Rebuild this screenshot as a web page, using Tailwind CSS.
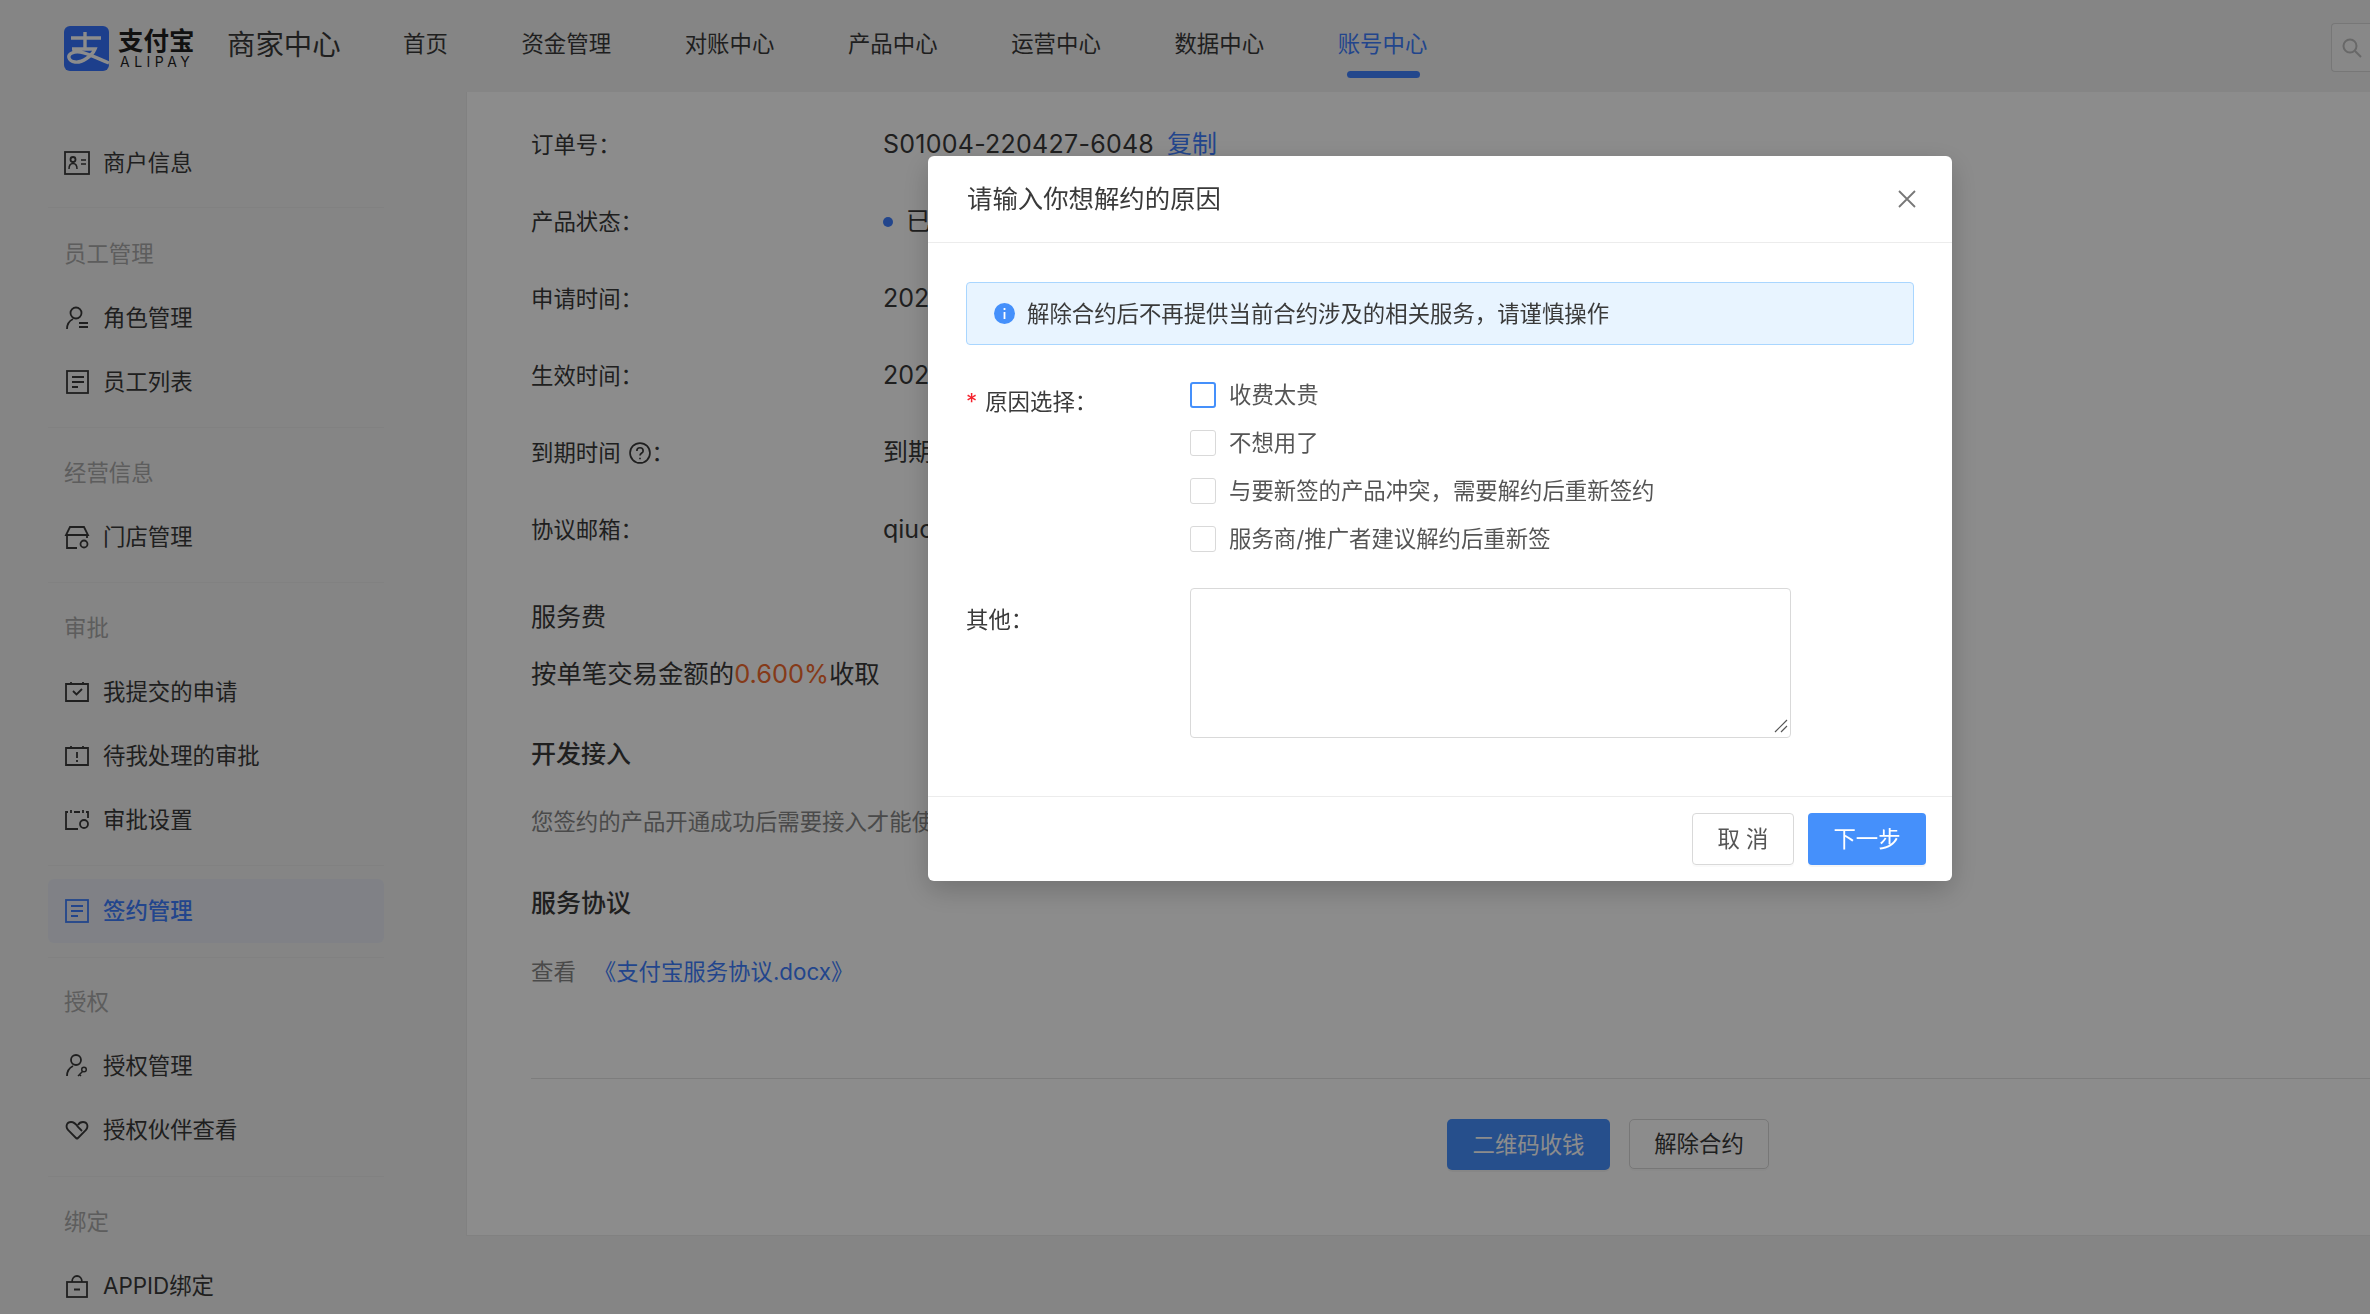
<!DOCTYPE html>
<html lang="zh-CN">
<head>
    <meta charset="UTF-8">
    <title>商家中心</title>
    <script src="https://cdn.jsdelivr.net/npm/@tailwindcss/browser@4"></script>
</head>
<body class="h-[1314px] overflow-hidden bg-[#f2f2f2] text-[22.4px] text-[#3a3a3a] font-['Inter','Noto_Sans_CJK_SC',sans-serif]">

    <!-- Header -->
    <header class="h-[92px] flex items-start bg-[#f2f2f2]">
        <div class="flex items-center ml-[64px] mt-[24px] w-[339px]">
            <svg class="w-[45px] h-[45px]" viewBox="0 0 45 45">
                <rect width="45" height="45" rx="6" fill="#3573ff"/>
                <path d="M7 12H37M21 6V23M8 23H31C28 30 18 37 11 36 4 35 3 29 8 27 16 23 28 30 45 37" fill="none" stroke="#fff" stroke-width="3.400"/>
            </svg>
            <div class="ml-[9px] w-[76px] text-[#1f1f1f]">
                <div class="text-[25.500px] leading-[26px] font-bold whitespace-nowrap">支付宝</div>
                <div class="text-[14px] leading-[15px] tracking-[4.500px] pl-[2px]">ALIPAY</div>
            </div>
            <div class="ml-[33px] mb-[7px] text-[28.400px] whitespace-nowrap">商家中心</div>
        </div>
        <nav class="flex gap-[73.700px] h-[92px] whitespace-nowrap">
            <a class="h-[88px] flex items-center">首页</a>
            <a class="h-[88px] flex items-center">资金管理</a>
            <a class="h-[88px] flex items-center">对账中心</a>
            <a class="h-[88px] flex items-center">产品中心</a>
            <a class="h-[88px] flex items-center">运营中心</a>
            <a class="h-[88px] flex items-center">数据中心</a>
            <a class="relative h-[88px] flex items-center text-[#3f7fff]">账号中心
                <span class="absolute left-[9px] right-[7px] top-[71px] h-[7px] rounded-full bg-[#4182ff]"></span>
            </a>
        </nav>
        <div class="ml-auto mt-[23px] w-[39px] h-[49px] pl-[10px] flex items-center border border-r-0 border-[#d9d9d9] rounded-l-[4px] bg-[#f7f7f7]">
            <svg class="w-[20px] h-[20px]" viewBox="0 0 20 20" fill="none" stroke="#bdbdbd" stroke-width="2"><circle cx="8" cy="8" r="6.500"/><path d="M13 13l6 6"/></svg>
        </div>
    </header>

    <div class="flex">
        <!-- Sidebar -->
        <aside class="w-[466px] shrink-0 pl-[48px] pr-[82px] pt-[39px]">
            <a class="h-[64px] flex items-center gap-[13px] pl-[16px]">
                <svg class="w-[26px] h-[24px]" viewBox="0 0 26 24" fill="none" stroke="#3a3a3a" stroke-width="1.800"><rect x="1" y="1" width="24" height="22"/><circle cx="9" cy="8.500" r="2.500"/><path d="M5 18c0-3 1.500-5.500 4-5.500s4 2.500 4 5.500M17 9h5M17 13h5" stroke-width="1.500"/></svg>
                商户信息
            </a>
            <div class="mt-[12px] h-px bg-[#ebebeb]"></div>

            <div class="mt-[14px] h-[64px] flex items-center pl-[16px] text-[#aaa]">员工管理</div>
            <a class="h-[64px] flex items-center gap-[13px] pl-[16px]">
                <svg class="w-[26px] h-[26px]" viewBox="0 0 26 26" fill="none" stroke="#3a3a3a" stroke-width="1.800"><circle cx="12" cy="8" r="5.500"/><path d="M3 24c0-5 2-8 6-10M15 18h9M15 22h9"/></svg>
                角色管理
            </a>
            <a class="h-[64px] flex items-center gap-[13px] pl-[16px]">
                <svg class="w-[26px] h-[26px]" viewBox="0 0 26 26" fill="none" stroke="#3a3a3a" stroke-width="1.800"><rect x="3" y="2" width="21" height="22"/><path d="M8 8h12M8 13h12M8 18h6"/></svg>
                员工列表
            </a>
            <div class="mt-[13px] h-px bg-[#ebebeb]"></div>

            <div class="mt-[13px] h-[64px] flex items-center pl-[16px] text-[#aaa]">经营信息</div>
            <a class="h-[64px] flex items-center gap-[13px] pl-[16px]">
                <svg class="w-[26px] h-[26px]" viewBox="0 0 26 26" fill="none" stroke="#3a3a3a" stroke-width="1.800"><path d="M6 3h14l4 8H2zM3 11v13h10M23 11v3"/><circle cx="20" cy="20" r="3.500"/></svg>
                门店管理
            </a>
            <div class="mt-[13px] h-px bg-[#ebebeb]"></div>

            <div class="mt-[13px] h-[64px] flex items-center pl-[16px] text-[#aaa]">审批</div>
            <a class="h-[64px] flex items-center gap-[13px] pl-[16px]">
                <svg class="w-[26px] h-[26px]" viewBox="0 0 26 26" fill="none" stroke="#3a3a3a" stroke-width="1.800"><path d="M7 3v3M19 3v3M2 5h22v17H2z"/><path d="M9 12l3.500 3.500L18 10"/></svg>
                我提交的申请
            </a>
            <a class="h-[64px] flex items-center gap-[13px] pl-[16px]">
                <svg class="w-[26px] h-[26px]" viewBox="0 0 26 26" fill="none" stroke="#3a3a3a" stroke-width="1.800"><path d="M7 3v3M19 3v3M2 5h22v17H2z"/><path d="M13 9v6M13 17v2"/></svg>
                待我处理的审批
            </a>
            <a class="h-[64px] flex items-center gap-[13px] pl-[16px]">
                <svg class="w-[26px] h-[26px]" viewBox="0 0 26 26" fill="none" stroke="#3a3a3a" stroke-width="1.800"><path d="M7 3v3M19 3v3M10 5h6M22 5h2v6M14 22H2V5h2"/><circle cx="20" cy="17" r="4"/></svg>
                审批设置
            </a>
            <div class="mt-[13px] h-px bg-[#ebebeb]"></div>

            <a class="mt-[13px] h-[64px] flex items-center gap-[13px] pl-[16px] rounded-[6px] bg-[#e9ecf5] text-[#3f7fff] font-medium">
                <svg class="w-[26px] h-[26px]" viewBox="0 0 26 26" fill="none" stroke="#3f7fff" stroke-width="1.800"><rect x="2" y="2" width="22" height="22"/><path d="M7 8h12M7 13h12M7 18h7"/></svg>
                签约管理
            </a>
            <div class="mt-[14px] h-px bg-[#ebebeb]"></div>

            <div class="mt-[12px] h-[64px] flex items-center pl-[16px] text-[#aaa]">授权</div>
            <a class="h-[64px] flex items-center gap-[13px] pl-[16px]">
                <svg class="w-[26px] h-[26px]" viewBox="0 0 26 26" fill="none" stroke="#3a3a3a" stroke-width="1.800"><circle cx="12" cy="7" r="5"/><path d="M3 23c0-5 2-8 6-10"/><circle cx="20" cy="16.500" r="2.300" stroke-width="1.500"/><path d="M18.500 18.500 14 23M15 21l2 2" stroke-width="1.500"/></svg>
                授权管理
            </a>
            <a class="h-[64px] flex items-center gap-[13px] pl-[16px]">
                <svg class="w-[26px] h-[26px]" viewBox="0 0 26 26" fill="none" stroke="#3a3a3a" stroke-width="1.800"><path d="M13 22 4 13C1 9 3 5 7 5c3 0 5 2 7 5l4 4M13 22l9-9c3-4 1-8-3-8-2 0-4 1-5 3"/></svg>
                授权伙伴查看
            </a>
            <div class="mt-[14px] h-px bg-[#ebebeb]"></div>

            <div class="mt-[13px] h-[64px] flex items-center pl-[16px] text-[#aaa]">绑定</div>
            <a class="h-[64px] flex items-center gap-[13px] pl-[16px]">
                <svg class="w-[26px] h-[26px]" viewBox="0 0 26 26" fill="none" stroke="#3a3a3a" stroke-width="1.800"><rect x="3" y="9" width="20" height="15"/><path d="M8 9c0-8 10-8 10 0M10 16.500h6"/></svg>
                APPID绑定
            </a>
        </aside>

        <!-- Detail panel -->
        <main class="flex-1 h-[1144px] bg-white border-l border-b border-[#ebebeb] pl-[64px] pt-[22px]">
            <div class="h-[62px] flex items-center"><span class="w-[352px]">订单号：</span><span class="text-[25px] tracking-[0.250px]">S01004-220427-6048</span><a class="ml-[13px] text-[25px] text-[#3f7fff]">复制</a></div>
            <div class="mt-[15px] h-[62px] flex items-center"><span class="w-[352px]">产品状态：</span><span class="w-[10px] h-[10px] rounded-full bg-[#3f7fff] mr-[13px]"></span><span class="text-[25px]">已生效</span></div>
            <div class="mt-[15px] h-[62px] flex items-center"><span class="w-[352px]">申请时间：</span><span class="text-[25px]">2022-04-27 10:12:36</span></div>
            <div class="mt-[15px] h-[62px] flex items-center"><span class="w-[352px]">生效时间：</span><span class="text-[25px]">2022-04-27 10:15:02</span></div>
            <div class="mt-[15px] h-[62px] flex items-center">
                <span class="w-[352px] flex items-center">到期时间
                    <svg class="w-[22px] h-[22px] ml-[8px] mr-[1px]" viewBox="0 0 21 21" fill="none" stroke="#3a3a3a" stroke-width="1.600"><circle cx="10.500" cy="10.500" r="9.500"/><path d="M7.500 8.500c0-4 6-4 6 0 0 2-3 2-3 4.500M10.500 15v1.500"/></svg>：</span>
                <span class="text-[25px]">到期后自动续约</span>
            </div>
            <div class="mt-[15px] h-[62px] flex items-center"><span class="w-[352px]">协议邮箱：</span><span class="text-[25px]">qiuchen@alipay.com</span></div>

            <h3 class="mt-[36px] text-[25px] leading-[40px]">服务费</h3>
            <p class="mt-[17px] text-[25.400px] leading-[40px]">按单笔交易金额的<span class="text-[#f26a2e]">0.600%</span>收取</p>
            <h3 class="mt-[40px] text-[25px] leading-[40px] font-medium">开发接入</h3>
            <p class="mt-[28px] leading-[40px] text-[#888] whitespace-nowrap">您签约的产品开通成功后需要接入才能使用</p>
            <h3 class="mt-[41px] text-[25px] leading-[40px] font-medium">服务协议</h3>
            <p class="mt-[29px] leading-[40px] text-[#888]">查看<a class="ml-[18px] text-[#3f7fff]">《支付宝服务协议.docx》</a></p>

            <div class="mt-[86px] h-px bg-[#e3e3e3]"></div>
            <div class="mt-[40px] ml-[916px] flex gap-[19px]">
                <button class="w-[163px] h-[51px] rounded-[5px] bg-[#4590ff] text-white shadow-[0_2px_0_rgba(0,0,0,0.04)]">二维码收钱</button>
                <button class="w-[140px] h-[50px] rounded-[5px] border border-[#d9d9d9] bg-white shadow-[0_2px_0_rgba(0,0,0,0.02)]">解除合约</button>
            </div>
        </main>
    </div>

    <!-- Mask + modal -->
    <div class="fixed inset-0 bg-black/45">
        <div class="absolute left-[928px] top-[156px] w-[1024px] h-[725px] rounded-[6px] bg-white shadow-[0_9px_28px_rgba(0,0,0,0.2)]">
            <div class="h-[87px] border-b border-[#ececec] px-[39px] flex items-center justify-between text-[25.400px]">
                请输入你想解约的原因
                <svg class="w-[20px] h-[20px] -mr-[4px]" viewBox="0 0 20 20" fill="none" stroke="#777" stroke-width="1.800"><path d="M2 2l16 16M18 2 2 18"/></svg>
            </div>

            <div class="mx-[38px] mt-[39px] h-[63px] flex items-center pl-[27px] bg-[#e8f4ff] border border-[#a9d6ff] rounded-[4px]">
                <svg class="w-[21px] h-[21px] mr-[12px]" viewBox="0 0 21 21"><circle cx="10.500" cy="10.500" r="10.500" fill="#4590fb"/><path d="M10.500 5v2M10.500 9v7" stroke="#fff" stroke-width="1.800"/></svg>
                解除合约后不再提供当前合约涉及的相关服务，请谨慎操作
            </div>

            <div class="flex mt-[37px] ml-[38px]">
                <div class="w-[224px] pt-[4px] leading-[32px]"><span class="text-[#f5222d] mr-[8px]">*</span>原因选择：</div>
                <div class="flex flex-col gap-[22px]">
                    <label class="h-[26px] flex items-center gap-[13px] text-[#555]"><span class="w-[26px] h-[26px] rounded-[3px] border-2 border-[#4590fb]"></span>收费太贵</label>
                    <label class="h-[26px] flex items-center gap-[13px] text-[#555]"><span class="w-[26px] h-[26px] rounded-[3px] border border-[#d9d9d9]"></span>不想用了</label>
                    <label class="h-[26px] flex items-center gap-[13px] text-[#555]"><span class="w-[26px] h-[26px] rounded-[3px] border border-[#d9d9d9]"></span>与要新签的产品冲突，需要解约后重新签约</label>
                    <label class="h-[26px] flex items-center gap-[13px] text-[#555]"><span class="w-[26px] h-[26px] rounded-[3px] border border-[#d9d9d9]"></span>服务商/推广者建议解约后重新签</label>
                </div>
            </div>

            <div class="flex mt-[36px] ml-[38px]">
                <div class="w-[224px] pt-[16px] leading-[32px]">其他：</div>
                <div class="relative w-[601px] h-[150px] rounded-[4px] border border-[#d9d9d9]">
                    <svg class="absolute right-[2px] bottom-[4px] w-[14px] h-[14px]" viewBox="0 0 14 14" fill="none" stroke="#555" stroke-width="1.200"><path d="M1 13 13 1M7 13l6-6"/></svg>
                </div>
            </div>

            <div class="absolute left-0 right-0 bottom-0 h-[85px] border-t border-[#ececec] flex justify-end items-start pt-[16px] pr-[26px] gap-[14px]">
                <button class="w-[102px] h-[52px] pl-[6px] rounded-[4px] border border-[#d9d9d9] text-[#555] tracking-[6px] shadow-[0_2px_0_rgba(0,0,0,0.02)]">取消</button>
                <button class="w-[118px] h-[52px] rounded-[4px] bg-[#4590fb] text-white shadow-[0_2px_0_rgba(0,0,0,0.04)]">下一步</button>
            </div>
        </div>
    </div>
</body>
</html>
